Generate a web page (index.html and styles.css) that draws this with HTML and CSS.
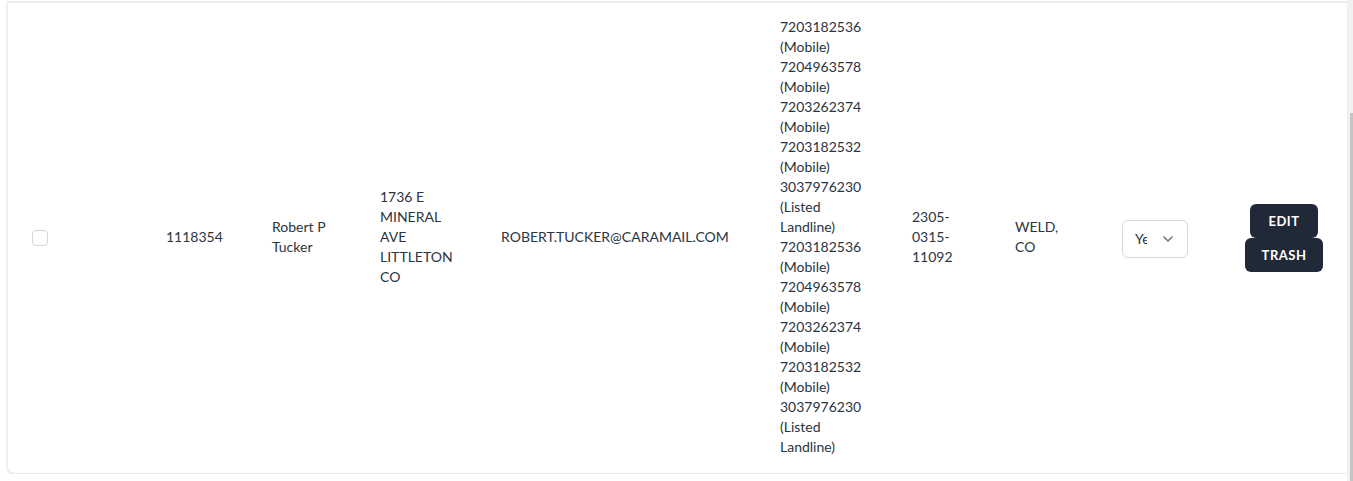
FILE: index.html
```html
<!DOCTYPE html>
<html>
<head>
<meta charset="utf-8">
<link rel="stylesheet" href="styles.css">
</head>
<body>
<div class="card">
  <table class="grid">
    <colgroup>
      <col class="c-check"><col class="c-id"><col class="c-name"><col class="c-addr"><col class="c-email"><col class="c-phone"><col class="c-ref"><col class="c-county"><col class="c-select"><col class="c-actions">
    </colgroup>
    <tbody>
      <tr>
        <td><span class="checkbox"></span></td>
        <td>1118354</td>
        <td>Robert P Tucker</td>
        <td>1736 E MINERAL AVE LITTLETON CO</td>
        <td>ROBERT.TUCKER@CARAMAIL.COM</td>
        <td>7203182536 (Mobile) 7204963578 (Mobile) 7203262374 (Mobile) 7203182532 (Mobile) 3037976230 (Listed Landline) 7203182536 (Mobile) 7204963578 (Mobile) 7203262374 (Mobile) 7203182532 (Mobile) 3037976230 (Listed Landline)</td>
        <td>2305-0315-11092</td>
        <td>WELD, CO</td>
        <td>
          <div class="select"><span class="select-text">Yes</span>
            <svg class="chev" width="10" height="6" viewBox="0 0 10 6"><path d="M1 1l4 4 4-4" fill="none" stroke="#6b7280" stroke-width="1.6" stroke-linecap="round" stroke-linejoin="round"/></svg>
          </div>
        </td>
        <td class="actions">
          <div class="btns">
            <button class="btn btn-edit">EDIT</button>
            <button class="btn">TRASH</button>
          </div>
        </td>
      </tr>
    </tbody>
  </table>
</div>
<div class="scrollbar"><div class="thumb"></div></div>
</body>
</html>
```
FILE: styles.css
```css
html, body {
  margin: 0;
  padding: 0;
  background: #ffffff;
}
body {
  font-family: "Lato", "Noto Sans", sans-serif;
  font-size: 14px;
  line-height: 20px;
  color: #2b3441;
  overflow: hidden;
}
.card {
  margin: 1px 0 0 7px;
  width: 1360px;
  height: 473px;
  box-sizing: border-box;
  background: #fff;
  border-left: 1px solid #ececec;
  border-top: 2px solid #ebebeb;
  border-bottom: 1px solid #ececec;
  border-radius: 0 0 8px 8px;
  box-shadow: 0 2px 3px rgba(0, 0, 0, 0.10);
}
.grid {
  border-collapse: collapse;
  table-layout: fixed;
  width: 1340px;
}
.grid td {
  padding: 14px 24px 16px;
  vertical-align: middle;
  word-wrap: break-word;
}
.c-check { width: 134px; }
.c-id { width: 106px; }
.c-name { width: 108px; }
.c-addr { width: 121px; }
.c-email { width: 279px; }
.c-phone { width: 132px; }
.c-ref { width: 103px; }
.c-county { width: 107px; }
.c-select { width: 123px; }
.c-actions { width: 127px; }
.checkbox {
  display: block;
  width: 16px;
  height: 16px;
  box-sizing: border-box;
  border: 1px solid #d4d4d8;
  border-radius: 4px;
  margin-top: 2px;
}
.select {
  width: 66px;
  height: 38px;
  box-sizing: border-box;
  border: 1px solid #d6d8dc;
  border-radius: 6px;
  display: flex;
  align-items: center;
  padding-left: 12px;
  margin-top: 3px;
}
.select-text {
  width: 12px;
  overflow: hidden;
  white-space: nowrap;
  font-size: 14px;
}
.chev {
  margin-left: 16px;
}
.actions {
  padding-left: 0 !important;
  padding-right: 0 !important;
}
.btns {
  display: flex;
  flex-direction: column;
  align-items: center;
  margin-top: 2px;
  margin-left: -1px;
}
.btn {
  font-family: "Lato", "Noto Sans", sans-serif;
  font-weight: 700;
  font-size: 13px;
  letter-spacing: 0.5px;
  color: #ffffff;
  background: #1f2937;
  border: none;
  border-radius: 6px;
  height: 34px;
  padding: 0 17px;
  line-height: 34px;
}
.btn-edit {
  padding: 0 18px;
}
.scrollbar {
  position: fixed;
  top: 0;
  right: 0;
  width: 6px;
  height: 100%;
  background: #f1f1f1;
}
.thumb {
  position: absolute;
  top: 113px;
  right: 0;
  width: 3px;
  bottom: 0;
  background: #c4c4c4;
}
```
